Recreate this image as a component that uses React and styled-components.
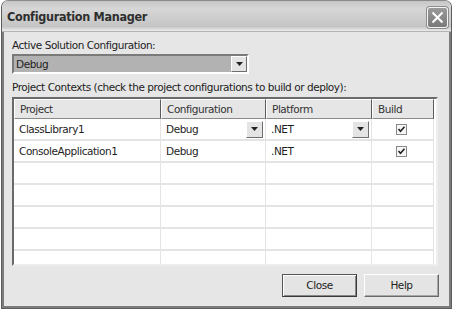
import styled, { createGlobalStyle } from "styled-components";

const Global = createGlobalStyle`
    html, body {
        margin: 0;
        padding: 0;
        background: #ffffff;
    }
    body {
        font-family: "DejaVu Sans", Verdana, sans-serif;
        font-size: 10.5px;
        letter-spacing: -0.45px;
        color: #1e1e1e;
    }
`;

const Page = styled.div`
    width: 454px;
    height: 312px;
    padding: 0 2px 3px 1px;
    box-sizing: border-box;
`;

const Window = styled.div`
    width: 100%;
    height: 100%;
    display: flex;
    flex-direction: column;
    border: 1px solid #5e5e5e;
    border-top-color: #8a8a8a;
    border-radius: 7px 7px 0 0;
    background: #e6e6e6;
    box-sizing: border-box;
    overflow: hidden;
`;

const TitleBar = styled.div`
    height: 30px;
    flex: none;
    display: flex;
    align-items: center;
    justify-content: space-between;
    padding: 0 3px 0 5px;
    background: linear-gradient(#c6c6c6 0%, #d6d6d6 25%, #cdcdcd 60%, #c4c4c4 85%, #ececec 100%);
    border-bottom: 1px solid #b4b4b4;
`;

const Title = styled.div`
    font-family: "DejaVu Sans Condensed", "DejaVu Sans", sans-serif;
    font-weight: bold;
    font-size: 12.5px;
    letter-spacing: -0.3px;
    color: #2e2e2e;
    margin-top: 1px;
`;

const CloseBox = styled.div`
    width: 21px;
    height: 21px;
    border-radius: 3px;
    border: 1px solid #f4f4f4;
    background: linear-gradient(#9a9a9a, #7a7a7a);
    box-shadow: 0 0 0 1px #8c8c8c;
    display: flex;
    align-items: center;
    justify-content: center;
    box-sizing: border-box;
    margin-top: 2px;
`;

const Body = styled.div`
    flex: 1;
    display: flex;
    flex-direction: column;
    padding: 6px 11px 0 8px;
    border-left: 2px solid #7c7c7c;
    border-right: 2px solid #7c7c7c;
    border-bottom: 2px solid #7c7c7c;
`;

const Label = styled.div`
    height: 14px;
    line-height: 14px;
    margin-bottom: ${p => p.gap}px;
    color: #222;
`;

const Combo = styled.div`
    width: 237px;
    height: 20px;
    display: flex;
    box-sizing: border-box;
    border: 2px solid;
    border-color: #7a7a7a #ffffff #ffffff #7a7a7a;
    background: #b2b2b2;
    margin-bottom: 6px;
`;

const ComboText = styled.div`
    flex: 1;
    padding-left: 2px;
    line-height: 16px;
`;

const ArrowButton = styled.div`
    width: ${p => p.w}px;
    height: ${p => p.h}px;
    flex: none;
    box-sizing: border-box;
    border: 1px solid;
    border-color: #ffffff #6e6e6e #6e6e6e #ffffff;
    background: #e4e4e4;
    display: flex;
    align-items: center;
    justify-content: center;
`;

const Grid = styled.div`
    width: 426px;
    height: 169px;
    box-sizing: border-box;
    border: 2px solid;
    border-color: #6a6a6a #eeeeee #eeeeee #6a6a6a;
    background: #ffffff;
    overflow: hidden;
`;

const Row = styled.div`
    display: grid;
    grid-template-columns: 147px 105px 106px 62px;
    height: ${p => (p.header ? 20 : 22)}px;
`;

const HeadCell = styled.div`
    box-sizing: border-box;
    border: 1px solid;
    border-color: #ffffff #5a5a5a #8a8a8a #ffffff;
    background: #e6e6e6;
    padding-left: 5px;
    line-height: 18px;
    color: #333;
`;

const Cell = styled.div`
    box-sizing: border-box;
    border-right: 1px solid #e4e4e4;
    border-bottom: 2px solid #e4e4e4;
    display: flex;
    align-items: center;
    justify-content: ${p => (p.center ? "center" : "space-between")};
    padding-left: ${p => (p.center ? 0 : 5)}px;
    padding-right: 2px;
    color: #1e1e1e;
`;

const Check = styled.div`
    width: 11px;
    height: 11px;
    box-sizing: border-box;
    border: 1px solid #8a8a8a;
    background: #f6f6f6;
    display: flex;
    align-items: center;
    justify-content: center;
`;

const Footer = styled.div`
    display: flex;
    justify-content: flex-end;
    gap: 7px;
    padding: 8px 0 0;
    margin-right: -1px;
`;

const Button = styled.div`
    width: 75px;
    height: 23px;
    box-sizing: border-box;
    border: 1px solid;
    border-color: ${p => (p.primary ? "#555 #3a3a3a #3a3a3a #555" : "#ffffff #6a6a6a #6a6a6a #ffffff")};
    box-shadow: ${p => (p.primary ? "inset 1px 1px 0 #fff, inset -1px -1px 0 #888" : "inset -1px -1px 0 #a8a8a8")};
    background: #e4e4e4;
    text-align: center;
    line-height: 21px;
    color: #222;
`;

const Arrow = () => (
    <svg width="7" height="4" viewBox="0 0 7 4">
        <path d="M0 0h7L3.5 4z" fill="#222" />
    </svg>
);

const rows = [
    { project: "ClassLibrary1", config: "Debug", platform: ".NET", build: true, active: true },
    { project: "ConsoleApplication1", config: "Debug", platform: ".NET", build: true },
    {}, {}, {}, {}, {},
];

export default function App() {
    return (
        <Page>
            <Global />
            <Window>
                <TitleBar>
                    <Title>Configuration Manager</Title>
                    <CloseBox>
                        <svg width="13" height="13" viewBox="0 0 13 13">
                            <path d="M1.5 1.5l10 10M11.5 1.5l-10 10" stroke="#ffffff" strokeWidth="2" />
                        </svg>
                    </CloseBox>
                </TitleBar>
                <Body>
                    <Label gap={2}>Active Solution Configuration:</Label>
                    <Combo>
                        <ComboText>Debug</ComboText>
                        <ArrowButton w={16} h={16}><Arrow /></ArrowButton>
                    </Combo>
                    <Label gap={3}>Project Contexts (check the project configurations to build or deploy):</Label>
                    <Grid>
                        <Row header>
                            <HeadCell>Project</HeadCell>
                            <HeadCell>Configuration</HeadCell>
                            <HeadCell>Platform</HeadCell>
                            <HeadCell>Build</HeadCell>
                        </Row>
                        {rows.map((r, i) => (
                            <Row key={i}>
                                <Cell>{r.project}</Cell>
                                <Cell>
                                    {r.config}
                                    {r.active && <ArrowButton w={17} h={17}><Arrow /></ArrowButton>}
                                </Cell>
                                <Cell>
                                    {r.platform}
                                    {r.active && <ArrowButton w={17} h={17}><Arrow /></ArrowButton>}
                                </Cell>
                                <Cell center>
                                    {r.build && (
                                        <Check>
                                            <svg width="9" height="9" viewBox="0 0 9 9">
                                                <path d="M1.5 4l2 2.2L7.5 1.8" stroke="#222" strokeWidth="1.6" fill="none" />
                                            </svg>
                                        </Check>
                                    )}
                                </Cell>
                            </Row>
                        ))}
                    </Grid>
                    <Footer>
                        <Button primary>Close</Button>
                        <Button>Help</Button>
                    </Footer>
                </Body>
            </Window>
        </Page>
    );
}
